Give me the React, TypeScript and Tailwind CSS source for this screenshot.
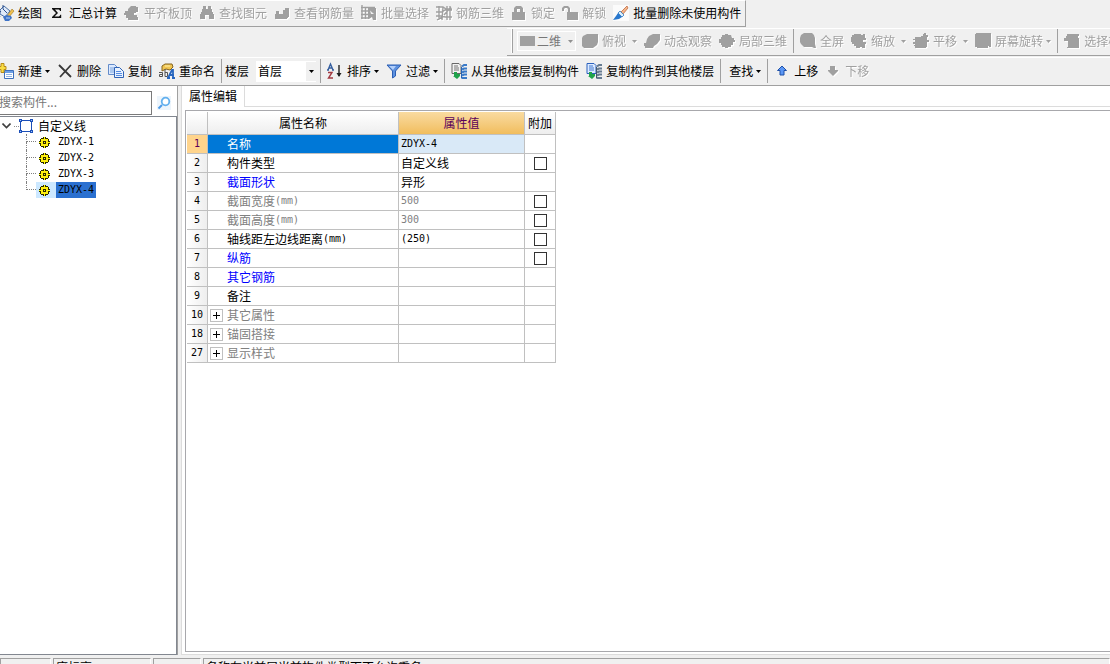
import React from "react";

type IconName =
  | "paint" | "sigma" | "slab" | "binoculars" | "bar" | "batch" | "mesh" | "lock" | "unlock" | "brush"
  | "flat" | "cube" | "orbit" | "local" | "full" | "zoom" | "pan" | "rotate" | "pick"
  | "new" | "delete" | "copy" | "rename" | "sort" | "filter" | "copyFrom" | "copyTo" | "up" | "down";

const G = "#a0a0a0";

const drawings: Record<IconName, React.ReactNode> = {
  paint: (
    <>
      <path d="M2 5 6 1l6 5-5 6-5-3z" fill="#dfe9f8" stroke="#4a6fa5" />
      <path d="M5 4l4 4M3 6c-2 1-2 5-1 6M5 4V0" stroke="#2b4f8c" fill="none" />
      <path d="M14 4l2 2-5 6-2-1z" fill="#f0c050" stroke="#9a7420" strokeWidth=".6" />
      <path d="M5 12c2-2 5-2 8-1l1 2-3 3H7z" fill="#3f74c8" />
      <path d="M8 13h4" stroke="#b8d2f6" />
    </>
  ),
  sigma: <path d="M3 3h9v3h-1c0-1-.6-1.600-2-1.600H6L9 8l-3.500 3.600H9c1.500 0 2-.6 2.200-1.800h1V13H3v-1l4-4-4-4z" fill="#111" />,
  slab: <path d="M1 6h3V4l3-3h5v1h2v5h-2v1h-2v2h3v2h1v3H4v-2H2v-3H0V8h1z" fill={G} />,
  binoculars: <path d="M4 1h3v3h2V1h3v3h1v3h1v2h1v5h-5v-4H6v4H1V9h1V7h1V4h1z" fill={G} />,
  bar: <path d="M2 6h3v3h4V5h2V3h4v9h-1v1h-1v1H1V9h1z" fill={G} />,
  batch: (
    <>
      <path d="M1 0v14M4.500 2v12M0 2.500h14M0 6h8M0 9.500h7M0 13h8" fill="none" stroke={G} strokeWidth="1.400" />
      <path d="M7 3h8v12h-3l-1-3-3 2H7z" fill={G} />
      <path d="M9 5.500 13 9h-3z" fill="#f0f0f0" />
    </>
  ),
  mesh: <path d="M0 2h7l3 2h6M0 7h6l3-2h7M0 11h6l3 1h7M1 15l5-3M3 1v14M7 2 6 15M11 1v14M14 1v14M8 10l7-8" fill="none" stroke={G} strokeWidth="1.400" />,
  lock: <path fillRule="evenodd" d="M1 7h2V3l2-2h5l2 2v4h2v8H1zm5 0h3V4H6z" fill={G} />,
  unlock: <path fillRule="evenodd" d="M0 6V3l2-2h4l2 2v4h8v8H5V7h1V4L5 3H3L2 4v2z" fill={G} />,
  brush: (
    <>
      <path d="M0 0h16v16H0z" fill="#fbfbfb" />
      <path d="M14 1 8 7l2 2 5-6z" fill="#f4b78b" stroke="#c06b42" strokeWidth=".8" />
      <path d="M7 6l4 4-2 2-4-4z" fill="#dceefa" stroke="#357bbf" strokeWidth=".8" />
      <path d="M5 8l4 4-3 2-6 1 3-4z" fill="#2878ce" />
    </>
  ),
  flat: <path d="M0 3h15v10H0z" fill={G} />,
  cube: <path d="M0 5l1-2 4-2h11v8l-1 3-4 3H2l-2-2z" fill={G} />,
  orbit: <path d="M3 6l2-3 4-2h7v6l-3 4-3 2-1 2H1v-2H0v-3h2z" fill={G} />,
  local: <path d="M6 2V1h3v1h3l1 3h2v2h1v2h-2v3h-2v2H9v1H6v-1H3v-2H2v-2H0V6h2V4h1V2z" fill={G} />,
  full: <path d="M4 0h8l2 2 1 3v6l1 4h-2l-2-1H4l-3-3-1-2V5l1-3z" fill={G} />,
  zoom: <path d="M3 1h7v1h2V1h2v4h1v2h-3v2h3v2h-1v4h-3v-1H9v1H5v-2H3v-2H1V9H0V4h1V2h2z" fill={G} />,
  pan: <path d="M2 4h6V3h2V1h1V0h2v2h2v2h-1v3h2v2h-2v5h-1v1H2v-2H1v-1h1v-1H0V9h2V7H0V6h2z" fill={G} />,
  rotate: <path d="M0 1h1V0h15v14h-2v-1h-1v2H2v-1H0z" fill={G} />,
  pick: <path d="M3 3V1h12v2h-1v2h1v10H3v-1h1V8H0V5h2V3z" fill={G} />,
  new: (
    <>
      <path d="M6.500 7.500h9v8h-9z" fill="#fff" stroke="#3d70bd" />
      <path d="M7 8h8v2H7z" fill="#6d9fe5" />
      <path d="M8 11.500h6M8 13.500h6" stroke="#91b4e4" />
      <path d="M3 .5h3v3h2v3H6v3H3v-3H0v-3h3z" fill="#f9dd45" stroke="#b88b19" />
    </>
  ),
  delete: <path d="M2 2l12 12M14 2 3 14" stroke="#383838" strokeWidth="1.800" />,
  copy: (
    <>
      <path d="M.5 1.500h6l3 3v7h-9z" fill="#dceaff" stroke="#638bc9" />
      <path d="M2 5h4M2 7h4M2 9h4" stroke="#7ba4dd" />
      <path d="M6.500 4.500h5l4 4v6h-9z" fill="#e8f2ff" stroke="#2f62b5" />
      <path d="M8 8.500h5M8 10.500h6M8 12.500h6" stroke="#568be0" />
    </>
  ),
  rename: (
    <>
      <path d="M3 3l3-2h7l1 3-3 3-4-1-4 2z" fill="#f0c552" stroke="#846420" />
      <path d="M6 3h5" stroke="#fff0a8" />
      <path d="M0 9.500h3.500v4H.5v-2h3M6 6v7.500h2.500v-4H6" fill="none" stroke="#555" />
      <path d="M9 15l4-8h1v8M11 12h4M8 15h3M13 15h3" fill="none" stroke="#2766bf" strokeWidth="1.800" />
    </>
  ),
  sort: (
    <>
      <path d="M1 7 3.500 1 6 7M2 5h3M0 7h2M5 7h2" fill="none" stroke="#365f9f" strokeWidth="1.400" />
      <path d="M1 9.500h4L1.500 15H6" fill="none" stroke="#a33b43" strokeWidth="1.400" />
      <path d="M12 2v11" stroke="#222" strokeWidth="1.400" />
      <path d="M9.500 10h5L12 14z" fill="#222" />
    </>
  ),
  filter: (
    <>
      <path d="M1 2h14L9.500 8v5l-3 2V8z" fill="#5d91df" stroke="#2b5eb3" />
      <path d="M3 3h7L7 7z" fill="#b4d0fa" />
    </>
  ),
  copyFrom: (
    <>
      <path d="M1 .5h7l2 2v8H1z" fill="#f2f2f2" stroke="#686868" />
      <path d="M3 3h4M3 5h5M3 7h5" stroke="#777" />
      <path d="M10.500 4v11.500" stroke="#2864b4" />
      <path d="M11 3.500l2-1.500h3M11 6.500l2-1h3M11 9.500l2-1h3M11 12.500l2-1h3M11 15h5" stroke="#3b7bc8" strokeWidth="2" fill="none" />
      <path d="M3 9h3v2h3v2l-3 3-4-3h1z" fill="#20a34b" />
    </>
  ),
  copyTo: (
    <>
      <path d="M1 .5h7l2 2v8H1z" fill="#dceaff" stroke="#2b61bd" />
      <path d="M3 3h4M3 5h5M3 7h5" stroke="#3f77d0" />
      <path d="M10.500 4v11.500" stroke="#44566a" />
      <path d="M11 3.500l2-1.500h3M11 6.500l2-1h3M11 9.500l2-1h3M11 12.500l2-1h3M11 15h5" stroke="#667b91" strokeWidth="2" fill="none" />
      <path d="M3 9h3v2h3v2l-3 3-4-3h1z" fill="#20a34b" />
    </>
  ),
  up: <path d="M8 3 12.500 7.500H10V12H6V7.500H3.500z" fill="#5b97f5" stroke="#1f50a8" />,
  down: <path d="M5 3h5v4h3v1l-5 5-5-5V7h2z" fill={G} />,
};

function Icon({ name }: { name: IconName }) {
  return (
    <svg viewBox="0 0 16 16" className="h-4 w-4 shrink-0 overflow-visible" aria-hidden="true">
      {drawings[name]}
    </svg>
  );
}

function Arrow() {
  return (
    <svg viewBox="0 0 5 3" className="h-[3px] w-[5px] shrink-0" aria-hidden="true">
      <path d="M0 0h5L2.500 3z" fill="currentColor" />
    </svg>
  );
}

interface ToolProps {
  icon?: IconName;
  label: string;
  off?: boolean;
  menu?: "near" | "far";
}

function Tool({ icon, label, off, menu }: ToolProps) {
  return (
    <button
      type="button"
      disabled={off}
      className="flex h-5 shrink-0 items-center whitespace-nowrap text-black disabled:text-[#a0a0a0] disabled:drop-shadow-[1px_1px_0_#ffffff]"
    >
      {icon && (
        <span className="mr-1">
          <Icon name={icon} />
        </span>
      )}
      {label}
      {menu && (
        <span className={menu === "near" ? "ml-[3px]" : "ml-1.5"}>
          <Arrow />
        </span>
      )}
    </button>
  );
}

const Separator = () => <span className="mx-1.5 h-6 w-px shrink-0 bg-[#a0a0a0]" />;
const Group = ({ children }: { children: React.ReactNode }) => (
  <div className="flex shrink-0 items-center gap-[7px]">{children}</div>
);

function MainBar() {
  return (
    <div className="flex h-[27px] w-fit items-center gap-[7px] border-t border-r border-b border-t-white border-r-[#a0a0a0] border-b-[#a0a0a0] pr-1 pb-0.5">
      <div className="-ml-0.5 flex items-center gap-[7px]">
        <Tool icon="paint" label="绘图" />
        <Tool icon="sigma" label="汇总计算" />
        <Tool icon="slab" label="平齐板顶" off />
        <Tool icon="binoculars" label="查找图元" off />
        <Tool icon="bar" label="查看钢筋量" off />
        <Tool icon="batch" label="批量选择" off />
        <Tool icon="mesh" label="钢筋三维" off />
        <Tool icon="lock" label="锁定" off />
        <Tool icon="unlock" label="解锁" off />
        <Tool icon="brush" label="批量删除未使用构件" />
      </div>
    </div>
  );
}

function ViewBar() {
  return (
    <div className="mt-px ml-[507px] flex h-7 items-center overflow-hidden border-t border-b border-t-white border-b-[#a0a0a0] pb-0.5">
      <span className="mr-1 ml-1 h-6 w-0.5 shrink-0 border-r border-l border-r-[#a0a0a0] border-l-white" />
      <button
        type="button"
        disabled
        className="mr-1.5 flex h-5 shrink-0 items-center border border-white px-0.5 whitespace-nowrap text-[#777]"
      >
        <Icon name="flat" />
        <span className="ml-px">二维</span>
        <span className="ml-[7px] text-[#909090]">
          <Arrow />
        </span>
      </button>
      <Group>
        <Tool icon="cube" label="俯视" off menu="far" />
        <Tool icon="orbit" label="动态观察" off />
        <Tool icon="local" label="局部三维" off />
      </Group>
      <Separator />
      <Group>
        <Tool icon="full" label="全屏" off />
        <Tool icon="zoom" label="缩放" off menu="far" />
        <Tool icon="pan" label="平移" off menu="far" />
        <Tool icon="rotate" label="屏幕旋转" off menu="near" />
      </Group>
      <Separator />
      <Tool icon="pick" label="选择楼层" off />
    </div>
  );
}

function ComponentBar() {
  return (
    <div className="mt-px flex h-[29px] items-center overflow-hidden border-t border-b border-t-white border-b-[#a0a0a0] pb-px">
      <div className="-ml-0.5">
        <Group>
          <Tool icon="new" label="新建" menu="near" />
          <Tool icon="delete" label="删除" />
          <Tool icon="copy" label="复制" />
          <Tool icon="rename" label="重命名" />
        </Group>
      </div>
      <span className="mr-[3px] ml-1.5 h-6 w-px shrink-0 bg-[#a0a0a0]" />
      <label htmlFor="floor" className="shrink-0">楼层</label>
      <div className="ml-[7px] grid h-[21px] w-[60px] shrink-0 grid-cols-[1fr_10px] items-center bg-white">
        <select
          id="floor"
          className="col-span-2 col-start-1 row-start-1 h-full appearance-none bg-transparent pl-0.5 outline-none"
          defaultValue="首层"
        >
          <option>首层</option>
        </select>
        <span className="pointer-events-none col-start-2 row-start-1 flex h-[19px] items-center justify-center bg-[#f0f0f0]">
          <Arrow />
        </span>
      </div>
      <span className="mr-1.5 ml-1 h-6 w-px shrink-0 bg-[#a0a0a0]" />
      <Group>
        <Tool icon="sort" label="排序" menu="near" />
        <Tool icon="filter" label="过滤" menu="near" />
      </Group>
      <Separator />
      <Group>
        <Tool icon="copyFrom" label="从其他楼层复制构件" />
        <Tool icon="copyTo" label="复制构件到其他楼层" />
      </Group>
      <Separator />
      <div className="pl-0.5">
        <Tool label="查找" menu="near" />
      </div>
      <Separator />
      <Group>
        <Tool icon="up" label="上移" />
        <Tool icon="down" label="下移" off />
      </Group>
    </div>
  );
}

function Gear() {
  return (
    <svg viewBox="0 0 11 11" className="h-[11px] w-[11px] shrink-0" aria-hidden="true">
      <path d="M4 0h3v1h2v1h1v2h1v3h-1v2H9v1H7v1H4v-1H2V9H1V7H0V4h1V2h1V1h2z" fill="#2a2800" />
      <path d="M5 0h1v2H5zM5 9h1v2H5zM0 5h2v1H0zM9 5h2v1H9zM2 2h1v1H2zM8 2h1v1H8zM2 8h1v1H2zM8 8h1v1H8z" fill="#ffff00" />
      <path d="M3 2h5v1h1v5H8v1H3V8H2V3h1z" fill="#ffee10" />
      <path d="M4 4h3v3H4z" fill="#2a2800" />
      <path d="M5 5h1v1H5z" fill="#ffff00" />
    </svg>
  );
}

const items = ["ZDYX-1", "ZDYX-2", "ZDYX-3", "ZDYX-4"];

function TreePanel() {
  return (
    <aside className="flex w-[178px] shrink-0 flex-col border-r border-r-[#a0a0a0]">
      <form className="flex h-[30px] shrink-0 items-end bg-white pb-px" onSubmit={(e) => e.preventDefault()}>
        <input
          aria-label="搜索构件"
          placeholder="搜索构件..."
          className="-ml-1 h-6 w-[156px] border border-[#7a7a7a] bg-white px-0.5 pb-1 outline-none placeholder:text-[#777]"
        />
        <button type="button" aria-label="搜索" className="ml-1 flex h-6 w-4 items-center justify-center">
          <svg viewBox="0 0 14 14" className="h-3.5 w-3.5">
            <path d="M0 0h14v14H0z" fill="#edf5fc" />
            <path d="M5 9 1.500 12.500" stroke="#4c9be8" strokeWidth="2" />
            <circle cx="8.500" cy="5.500" r="3.800" fill="#fff" stroke="#62b0ee" strokeWidth="1.800" />
          </svg>
        </button>
      </form>
      <div className="flex-1 border-t border-r border-b border-[#828790] bg-white pt-px">
        <div className="flex h-4 items-center">
          <button type="button" aria-label="折叠" className="ml-0.5 flex h-4 w-3 items-center">
            <svg viewBox="0 0 9 6" className="h-1.5 w-[9px]">
              <path d="M.5.5l4 4 4-4" fill="none" stroke="#404040" strokeWidth="1.600" />
            </svg>
          </button>
          <span className="w-[5px] border-t border-dotted border-[#909090]" />
          <svg viewBox="0 0 14 14" className="h-3.5 w-3.5" aria-hidden="true">
            <path d="M1.500 1.500h11v11h-11z" fill="#fff" stroke="#1c4fb8" />
            <path d="M0 0h3v3H0zM11 0h3v3h-3zM0 11h3v3H0zM11 11h3v3h-3z" fill="#1c4fb8" />
            <path d="M1 1h1v1H1zM12 1h1v1h-1zM1 12h1v1H1zM12 12h1v1h-1z" fill="#9cc4ff" />
          </svg>
          <span className="ml-[5px]">自定义线</span>
        </div>
        <ul>
          {items.map((item, i) => {
            const last = i === items.length - 1;
            return (
              <li key={item} className="flex h-4 items-center pl-[26px]">
                <span className="flex h-4 w-2.5 flex-col">
                  <span className="h-2 w-full border-b border-l border-dotted border-[#808080]" />
                  <span className={last ? "h-2" : "h-2 border-l border-dotted border-[#808080]"} />
                </span>
                <span className={last ? "flex h-4 w-5 items-center bg-[#cce8ff] pl-[3px]" : "flex h-4 w-5 items-center pl-[3px]"}>
                  <Gear />
                </span>
                <button
                  type="button"
                  className={
                    last
                      ? "h-4 bg-[#2a70d0] px-0.5 font-['DejaVu_Sans_Mono',monospace] text-[10px] leading-4"
                      : "h-4 px-0.5 font-['DejaVu_Sans_Mono',monospace] text-[10px] leading-4"
                  }
                >
                  {item}
                </button>
              </li>
            );
          })}
        </ul>
      </div>
    </aside>
  );
}

interface Row {
  no: number;
  name: string;
  unit?: string;
  value?: string;
  tone: "normal" | "key" | "muted";
  box?: boolean;
  expand?: boolean;
}

const rows: Row[] = [
  { no: 1, name: "名称", value: "ZDYX-4", tone: "normal" },
  { no: 2, name: "构件类型", value: "自定义线", tone: "normal", box: true },
  { no: 3, name: "截面形状", value: "异形", tone: "key" },
  { no: 4, name: "截面宽度", unit: "(mm)", value: "500", tone: "muted", box: true },
  { no: 5, name: "截面高度", unit: "(mm)", value: "300", tone: "muted", box: true },
  { no: 6, name: "轴线距左边线距离", unit: "(mm)", value: "(250)", tone: "normal", box: true },
  { no: 7, name: "纵筋", tone: "key", box: true },
  { no: 8, name: "其它钢筋", tone: "key" },
  { no: 9, name: "备注", tone: "normal" },
  { no: 10, name: "其它属性", tone: "muted", expand: true },
  { no: 18, name: "锚固搭接", tone: "muted", expand: true },
  { no: 27, name: "显示样式", tone: "muted", expand: true },
];

const tones = { normal: "text-black", key: "text-[#0000ff]", muted: "text-[#808080]" };
const cell = "border-r border-b border-[#c0c0c0] p-0";
const mono = "font-['DejaVu_Sans_Mono','Noto_Sans_CJK_SC',monospace] text-[10px]";

function PropertyTable() {
  return (
    <table className="w-[369px] table-fixed border-separate border-spacing-0 text-left">
      <colgroup>
        <col className="w-[21px]" />
        <col className="w-[191px]" />
        <col className="w-[126px]" />
        <col className="w-[31px]" />
      </colgroup>
      <thead>
        <tr className="h-[23px] text-center">
          <td className={`${cell} bg-linear-to-b from-white to-[#eeeeee]`} />
          <th className={`${cell} bg-linear-to-b from-white to-[#eeeeee] text-center font-normal`}>属性名称</th>
          <th className={`${cell} bg-linear-to-b from-[#f9dba0] to-[#f1bd5c] text-center font-normal text-[#5a005a]`}>属性值</th>
          <th className={`${cell} bg-linear-to-b from-white to-[#eeeeee] text-center font-normal`}>附加</th>
        </tr>
      </thead>
      <tbody>
        {rows.map((r) => {
          const active = r.no === 1;
          return (
            <tr key={r.no} className="h-[19px]">
              <th
                className={`${cell} ${mono} text-center font-normal ${
                  active ? "bg-[#ffd48c] text-[#5a005a]" : "bg-linear-to-r from-white to-[#eeeeee]"
                }`}
              >
                {r.no}
              </th>
              <td className={`${cell} ${active ? "bg-[#0078d7] text-white" : tones[r.tone]}`}>
                <div className="flex h-[18px] items-center whitespace-nowrap">
                  <span className="flex w-[19px] shrink-0 pl-0.5">
                    {r.expand && (
                      <button
                        type="button"
                        aria-label={`展开${r.name}`}
                        className="flex h-[13px] w-[13px] items-center justify-center border border-[#c0c0c0] bg-white"
                      >
                        <svg viewBox="0 0 7 7" className="h-[7px] w-[7px]">
                          <path d="M0 3h7v1H0zM3 0h1v7H3z" fill="#000" />
                        </svg>
                      </button>
                    )}
                  </span>
                  {r.name}
                  {r.unit && <span className={mono}>{r.unit}</span>}
                </div>
              </td>
              <td
                className={`${cell} ${active ? "bg-[#d9e9f7]" : ""} ${r.tone === "muted" ? "text-[#808080]" : "text-black"}`}
              >
                <div className={`flex h-[18px] items-center pl-0.5 ${r.value && /\d/.test(r.value) ? mono : ""}`}>{r.value}</div>
              </td>
              <td className={cell}>
                {r.box && (
                  <input
                    type="checkbox"
                    aria-label={`附加${r.name}`}
                    className="mx-auto block h-[13px] w-[13px] appearance-none border border-[#333] bg-white checked:bg-[#0078d7]"
                  />
                )}
              </td>
            </tr>
          );
        })}
      </tbody>
    </table>
  );
}

function PropertyPanel() {
  return (
    <main className="ml-[3px] flex min-w-0 flex-1 flex-col border-b border-l border-[#dcdcdc] bg-white">
      <div className="flex h-[21px] shrink-0" role="tablist">
        <button type="button" role="tab" aria-selected="true" className="w-[63px] shrink-0 border-r border-[#dcdcdc] pb-0.5 text-center">
          属性编辑
        </button>
        <span className="flex-1 border-b border-[#dcdcdc]" />
      </div>
      <div className="mt-[3px] mb-0.5 ml-[3px] min-h-0 flex-1 border-t border-b border-l border-[#a8a8ac] pt-px pl-px">
        <PropertyTable />
      </div>
    </main>
  );
}

function StatusBar() {
  const slot = "h-5 shrink-0 overflow-hidden whitespace-nowrap border-t border-r border-l border-t-[#a0a0a0] border-r-white border-l-[#a0a0a0] pl-0.5 leading-4";
  return (
    <footer className="flex h-[9px] shrink-0 items-start gap-0.5 overflow-hidden pt-[3px]">
      <span className={`${slot} w-[51px]`} />
      <span className={`${slot} w-[98px]`}>底标高</span>
      <span className={`${slot} w-12`} />
      <span className={`${slot} flex-1`}>名称在当前层当前构件类型下不允许重名</span>
    </footer>
  );
}

export default function App() {
  return (
    <div className="flex h-screen flex-col overflow-hidden bg-[#f0f0f0] font-['Noto_Sans_CJK_SC',sans-serif] text-xs leading-4 text-black">
      <header className="shrink-0">
        <MainBar />
        <ViewBar />
        <ComponentBar />
      </header>
      <div className="flex min-h-0 flex-1">
        <TreePanel />
        <PropertyPanel />
      </div>
      <StatusBar />
    </div>
  );
}
